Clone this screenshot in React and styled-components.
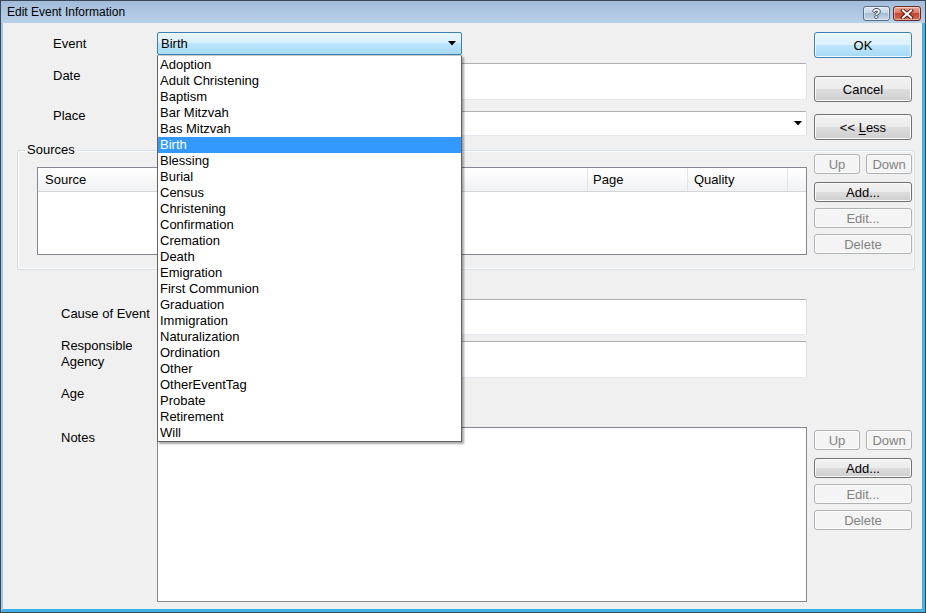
import React from "react";
import styled, { createGlobalStyle, css } from "styled-components";

const GlobalStyle = createGlobalStyle`
  html, body {
    margin: 0;
    padding: 0;
    background: #ffffff;
  }
  body {
    font-family: "Liberation Sans", Arial, sans-serif;
    font-size: 13px;
    color: #000;
  }
  * {
    box-sizing: border-box;
  }
`;

const EVENTS = [
  "Adoption",
  "Adult Christening",
  "Baptism",
  "Bar Mitzvah",
  "Bas Mitzvah",
  "Birth",
  "Blessing",
  "Burial",
  "Census",
  "Christening",
  "Confirmation",
  "Cremation",
  "Death",
  "Emigration",
  "First Communion",
  "Graduation",
  "Immigration",
  "Naturalization",
  "Ordination",
  "Other",
  "OtherEventTag",
  "Probate",
  "Retirement",
  "Will",
];

function Arrow() {
  return (
    <svg width="8" height="5" viewBox="0 0 8 5">
      <path d="M0 0h8L4 4.5z" fill="#000" />
    </svg>
  );
}

function ButtonStack({ top }) {
  return (
    <Side $mt={top}>
      <SmallRow>
        <Button disabled $w={46}>Up</Button>
        <Button disabled $w={46}>Down</Button>
      </SmallRow>
      <Button $mt={8}>Add...</Button>
      <Button disabled $mt={6}>Edit...</Button>
      <Button disabled $mt={6}>Delete</Button>
    </Side>
  );
}

export default function App() {
  return (
    <>
      <GlobalStyle />
      <Window>
        <TitleBar>
          <Title>Edit Event Information</Title>
          <TitleButtons>
            <HelpButton>?</HelpButton>
            <CloseButton>
              <svg width="14" height="10" viewBox="0 0 14 10">
                <path
                  d="M3 1.5l8 7M11 1.5l-8 7"
                  stroke="#5a1e16"
                  strokeWidth="4"
                  strokeLinecap="square"
                />
                <path
                  d="M3 1.5l8 7M11 1.5l-8 7"
                  stroke="#fff"
                  strokeWidth="2"
                  strokeLinecap="square"
                />
              </svg>
            </CloseButton>
          </TitleButtons>
        </TitleBar>

        <Client>
          <Row $mt={9}>
            <Label $indent={36} $mt={4}>Event</Label>
            <Field>
              <ComboWrap>
                <EventCombo>
                  <span>Birth</span>
                  <Arrow />
                </EventCombo>
                <DropList>
                  {EVENTS.map((e) => (
                    <DropItem key={e} $selected={e === "Birth"}>
                      {e}
                    </DropItem>
                  ))}
                </DropList>
              </ComboWrap>
            </Field>
            <Side>
              <Button $h={26} $default>OK</Button>
            </Side>
          </Row>

          <Row $mt={5}>
            <Label $indent={36} $mt={5}>Date</Label>
            <Field>
              <TextBox $h={37} />
            </Field>
            <Side $mt={13}>
              <Button $h={26}>Cancel</Button>
            </Side>
          </Row>

          <Row $mt={9}>
            <Label $indent={36} $mt={-3}>Place</Label>
            <Field>
              <PlaceCombo>
                <Arrow />
              </PlaceCombo>
            </Field>
            <Side $mt={3}>
              <Button $h={26}>
                &lt;&lt; <u>L</u>ess
              </Button>
            </Side>
          </Row>

          <Group>
            <Legend>Sources</Legend>
            <ListBox>
              <Header>
                <HeadCell $w={550} $pl={7}>Source</HeadCell>
                <HeadCell $w={100} $pl={5}>Page</HeadCell>
                <HeadCell $w={100} $pl={6}>Quality</HeadCell>
                <HeadFill />
              </Header>
            </ListBox>
            <ButtonStack top={0} />
          </Group>

          <Row $mt={29}>
            <Label $indent={44} $mt={7}>Cause of Event</Label>
            <Field>
              <TextBox $h={36} />
            </Field>
          </Row>

          <Row $mt={6}>
            <Label $indent={44} $mt={-3}>
              Responsible
              <br />
              Agency
            </Label>
            <Field>
              <TextBox $h={37} />
            </Field>
          </Row>

          <Row $mt={8}>
            <Label $indent={44}>Age</Label>
          </Row>

          <Row $mt={25}>
            <Label $indent={44} $mt={3}>Notes</Label>
            <Field>
              <NotesBox />
            </Field>
            <ButtonStack top={3} />
          </Row>
        </Client>
      </Window>
    </>
  );
}

const Window = styled.div`
  width: 926px;
  height: 613px;
  border: 1px solid #39485a;
  display: flex;
  flex-direction: column;
  background: #b9d1ea;
`;

const TitleBar = styled.div`
  height: 22px;
  flex: none;
  display: flex;
  align-items: flex-start;
  padding: 0 4px 0 6px;
  background: linear-gradient(#a2bcda, #b9d0e9);
`;

const Title = styled.div`
  font-size: 12px;
  line-height: 22px;
  color: #000;
`;

const TitleButtons = styled.div`
  margin-left: auto;
  margin-top: 5px;
  display: flex;
  gap: 3px;
`;

const titleBtn = css`
  height: 15px;
  border-radius: 3px;
  display: flex;
  align-items: center;
  justify-content: center;
  box-shadow: inset 0 0 0 1px rgba(255, 255, 255, 0.45);
`;

const HelpButton = styled.div`
  ${titleBtn};
  width: 27px;
  border: 1px solid #5d6e83;
  background: linear-gradient(#dfe8f2, #c2d2e4 50%, #a9bdd4 50%, #c6d7ea);
  color: #fff;
  font-weight: bold;
  font-size: 13px;
  line-height: 12px;
  text-shadow: 1px 0 0 #3c4a5c, -1px 0 0 #3c4a5c, 0 1px 0 #3c4a5c,
    0 -1px 0 #3c4a5c;
`;

const CloseButton = styled.div`
  ${titleBtn};
  width: 28px;
  border: 1px solid #6a2a22;
  background: linear-gradient(#eaa898, #d87563 50%, #c5442f 50%, #d4715b);
`;

const Client = styled.div`
  flex: 1;
  background: #f0f0f0;
  border-style: solid;
  border-width: 0 3px 3px 2px;
  border-color: #3fb3e5;
  border-left-color: #a9c6e4;
  padding-left: 14px;
  display: flex;
  flex-direction: column;
`;

const Row = styled.div`
  display: flex;
  align-items: flex-start;
  margin-top: ${(p) => p.$mt || 0}px;
`;

const Label = styled.div`
  width: 140px;
  flex: none;
  padding-left: ${(p) => p.$indent}px;
  margin-top: ${(p) => p.$mt || 0}px;
  line-height: 16px;
`;

const Field = styled.div`
  width: 650px;
  flex: none;
`;

const Side = styled.div`
  width: 98px;
  flex: none;
  margin-left: 7px;
  margin-top: ${(p) => p.$mt || 0}px;
  display: flex;
  flex-direction: column;
`;

const SmallRow = styled.div`
  display: flex;
  justify-content: space-between;
`;

const Button = styled.button`
  font-family: inherit;
  font-size: 13px;
  height: ${(p) => p.$h || 20}px;
  width: ${(p) => (p.$w ? `${p.$w}px` : "100%")};
  margin: ${(p) => p.$mt || 0}px 0 0 0;
  padding: 0;
  border-radius: 3px;
  line-height: 1;
  color: #000;
  border: 1px solid #707070;
  background: linear-gradient(#f2f2f2, #ebebeb 50%, #dddddd 50%, #cfcfcf);
  box-shadow: inset 0 0 0 1px #fbfbfb;

  ${(p) =>
    p.$default &&
    css`
      border-color: #3c7fb1;
      background: linear-gradient(#eaf6fd, #d9f0fc 50%, #bee6fd 50%, #a7d9f5);
      box-shadow: inset 0 0 0 1px #f4fbff;
    `}

  &:disabled {
    color: #838383;
    border-color: #adb2b5;
    background: #f4f4f4;
    box-shadow: inset 0 0 0 1px #fcfcfc;
  }

  u {
    text-decoration: underline;
    text-underline-offset: 2px;
  }
`;

const ComboWrap = styled.div`
  position: relative;
  width: 305px;
`;

const EventCombo = styled.div`
  height: 23px;
  display: flex;
  align-items: center;
  justify-content: space-between;
  padding: 0 5px 0 3px;
  border: 1px solid #3c7fb1;
  border-radius: 2px;
  background: linear-gradient(#eaf6fd, #d9f0fc 45%, #bee6fd 50%, #a7d9f5);
`;

const DropList = styled.div`
  position: absolute;
  top: 23px;
  left: 0;
  width: 305px;
  z-index: 10;
  padding-top: 1px;
  background: #fff;
  border: 1px solid #646464;
  border-top-color: #c8c8c8;
  box-shadow: 2px 2px 2px rgba(0, 0, 0, 0.35);
`;

const DropItem = styled.div`
  height: 16px;
  line-height: 16px;
  padding-left: 2px;
  white-space: nowrap;
  background: ${(p) => (p.$selected ? "#3399ff" : "transparent")};
  color: ${(p) => (p.$selected ? "#fff" : "#000")};
`;

const textBorder = css`
  border: 1px solid;
  border-color: #abadb3 #dbdfe6 #e3e9ef #e2e3ea;
  border-radius: 2px;
  background: #fff;
`;

const TextBox = styled.div`
  ${textBorder};
  height: ${(p) => p.$h}px;
`;

const PlaceCombo = styled.div`
  ${textBorder};
  height: 25px;
  display: flex;
  align-items: center;
  justify-content: flex-end;
  padding-right: 4px;
`;

const Group = styled.div`
  position: relative;
  width: 898px;
  margin-top: 10px;
  display: flex;
  align-items: flex-start;
  padding: 3px 2px 14px 19px;
  border: 1px solid #d5dfe5;
  border-radius: 3px;
  box-shadow: inset 0 0 0 1px #fbfbfb;
`;

const Legend = styled.div`
  position: absolute;
  top: -9px;
  left: 7px;
  padding: 0 2px;
  line-height: 16px;
  background: #f0f0f0;
`;

const ListBox = styled.div`
  width: 770px;
  height: 88px;
  margin-top: 13px;
  border: 1px solid #828790;
  background: #fff;
`;

const Header = styled.div`
  display: flex;
  height: 24px;
  background: linear-gradient(#ffffff, #f1f2f4);
  border-bottom: 1px solid #d5d5d5;
`;

const HeadCell = styled.div`
  width: ${(p) => p.$w}px;
  flex: none;
  padding: 1px 0 0 ${(p) => p.$pl}px;
  line-height: 22px;
  border-right: 1px solid #e3e5e8;
`;

const HeadFill = styled.div`
  flex: 1;
`;

const NotesBox = styled.div`
  height: 175px;
  border: 1px solid #828790;
  background: #fff;
`;
